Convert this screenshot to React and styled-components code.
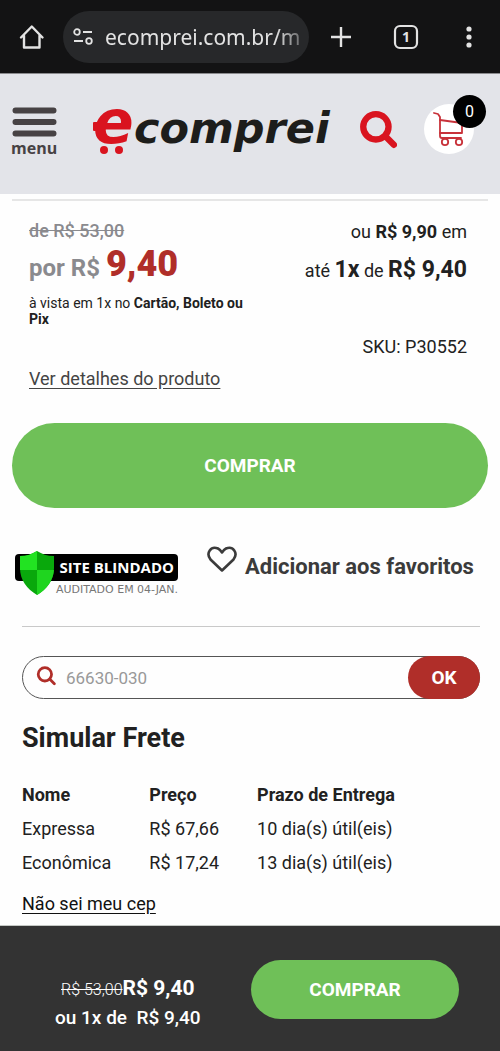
import React from 'react';
import styled, { createGlobalStyle } from 'styled-components';

const colors = {
  chrome: '#131314',
  pill: '#27282a',
  header: '#e3e4e9',
  logoRed: '#d9141f',
  red: '#b02e29',
  green: '#6fc058',
  dark: '#333333',
  text: '#212121',
  muted: '#8a8a8e',
};

const GlobalStyle = createGlobalStyle`
  * {
    box-sizing: border-box;
  }
  body {
    margin: 0;
    background: #fefefe;
    color: ${colors.text};
    font-family: Roboto, 'Liberation Sans', sans-serif;
    font-size: 18px;
  }
  button, input {
    font-family: inherit;
  }
`;

const Page = styled.div`
  display: flex;
  flex-direction: column;
  min-height: 100vh;
`;

const BrowserBar = styled.div`
  display: flex;
  align-items: center;
  gap: 17px;
  height: 74px;
  padding: 0 18px;
  background: ${colors.chrome};
  border-bottom: 1px solid #8a8a8d;
`;

const BrowserTools = styled.div`
  display: flex;
  align-items: center;
  gap: 37px;
`;

const IconButton = styled.button`
  display: flex;
  flex: none;
  padding: 0;
  border: 0;
  background: none;
  color: #e3e3e3;
  cursor: pointer;
`;

const AddressPill = styled.div`
  display: flex;
  align-items: center;
  flex: 1;
  min-width: 0;
  height: 52px;
  padding: 0 10px 0 10px;
  gap: 12px;
  border-radius: 26px;
  background: ${colors.pill};
`;

const Url = styled.span`
  flex: 1;
  overflow: hidden;
  white-space: nowrap;
  color: #e3e3e3;
  font-family: 'Noto Sans', sans-serif;
  font-size: 21px;
  line-height: 32px;
  mask-image: linear-gradient(to right, #000 88%, transparent 108%);
`;

const Header = styled.header`
  display: flex;
  align-items: flex-start;
  justify-content: space-between;
  height: 120px;
  padding: 12px 14px 0 11px;
  background: ${colors.header};
`;

const MenuButton = styled.button`
  display: flex;
  flex-direction: column;
  align-items: center;
  margin-top: 21px;
  padding: 0;
  border: 0;
  background: none;
  color: #474244;
  cursor: pointer;
`;

const MenuLabel = styled.span`
  font-family: 'Open Sans', sans-serif;
  font-size: 16px;
  font-weight: 700;
  line-height: 20px;
`;

const LogoLink = styled.a`
  display: flex;
  margin-left: 8px;
`;

const SearchButton = styled(IconButton)`
  margin-top: 25px;
  color: ${colors.logoRed};
`;

const CartButton = styled.button`
  position: relative;
  display: flex;
  align-items: center;
  justify-content: center;
  width: 50px;
  height: 50px;
  margin: 18px 12px 0 0;
  padding: 0;
  border: 0;
  border-radius: 50%;
  background: #fff;
  cursor: pointer;
`;

const CartCount = styled.span`
  position: absolute;
  top: -9px;
  right: -12px;
  width: 33px;
  border-radius: 50%;
  background: #000;
  color: #fff;
  font-size: 16px;
  line-height: 33px;
  text-align: center;
`;

const Main = styled.main`
  flex: 1;
  padding: 5px 12px 0;
`;

const PriceBlock = styled.section`
  display: flex;
  justify-content: space-between;
  height: 224px;
  padding: 18px 21px 0 17px;
  border-top: 2px solid #e6e6e6;
`;

const PriceColumn = styled.div`
  display: flex;
  flex-direction: column;
  align-items: flex-start;
  width: 220px;
`;

const OldPrice = styled.s`
  color: ${colors.muted};
  font-weight: 500;
  line-height: 24px;
`;

const Price = styled.div`
  color: ${colors.muted};
  font-size: 24px;
  font-weight: 700;
  line-height: 42px;

  strong {
    color: ${colors.red};
    font-size: 36px;
  }
`;

const PaymentNote = styled.p`
  margin: 6px 0 0;
  font-size: 14px;
  line-height: 16px;
`;

const DetailsLink = styled.a`
  margin-top: 40px;
  color: #444;
  line-height: 24px;
  text-underline-offset: 3px;
`;

const Installments = styled.div`
  margin-top: -6px;
  line-height: 38px;
  text-align: right;
`;

const Big = styled.strong`
  font-size: 23px;
`;

const Sku = styled.div`
  margin-top: 38px;
`;

const BuyButton = styled.button`
  display: block;
  width: ${(props) => props.$width || '100%'};
  height: ${(props) => props.$height}px;
  border: 0;
  border-radius: 43px;
  background: ${colors.green};
  color: #fff;
  font-size: 19px;
  font-weight: 700;
  cursor: pointer;
`;

const TrustRow = styled.div`
  display: flex;
  align-items: flex-start;
  gap: 28px;
  height: 118px;
  padding: 36px 3px 0;
`;

const Seal = styled.div`
  position: relative;
  flex: none;
  width: 163px;
  margin-top: 10px;
`;

const SealBar = styled.div`
  padding-right: 4px;
  border-radius: 4px;
  background: #000;
  color: #fff;
  font-family: 'Open Sans', sans-serif;
  font-size: 15px;
  font-weight: 700;
  line-height: 27px;
  text-align: right;
  white-space: nowrap;
`;

const SealDate = styled.div`
  color: #777;
  font-family: 'DejaVu Sans', sans-serif;
  font-size: 11px;
  line-height: 17px;
  text-align: right;
  white-space: nowrap;
`;

const Shield = styled.svg`
  position: absolute;
  top: -4px;
  left: 3px;
`;

const FavoriteButton = styled.button`
  display: flex;
  align-items: flex-start;
  gap: 7px;
  padding: 0;
  border: 0;
  background: none;
  color: #3b3b3b;
  font-size: 22px;
  font-weight: 700;
  line-height: 24px;
  white-space: nowrap;
  cursor: pointer;

  span {
    padding-top: 11px;
  }
`;

const Shipping = styled.section`
  padding: 29px 8px 0 10px;

  &::before {
    content: '';
    display: block;
    height: 1px;
    margin: -29px 0 29px;
    background: #c9c9c9;
  }
`;

const ZipForm = styled.form`
  display: flex;
  align-items: center;
  height: 43px;
  border: 1px solid #555;
  border-radius: 22px;
`;

const ZipLabel = styled.label`
  display: flex;
  padding: 0 10px 4px 13px;
  color: ${colors.red};
`;

const ZipInput = styled.input`
  flex: 1;
  min-width: 0;
  padding: 0;
  border: 0;
  outline: 0;
  background: none;
  color: #999;
  font-size: 17px;
`;

const OkButton = styled.button`
  width: 72px;
  height: 43px;
  margin-right: -1px;
  border: 0;
  border-radius: 22px;
  background: ${colors.red};
  color: #fff;
  font-size: 19px;
  font-weight: 700;
  cursor: pointer;
`;

const Title = styled.h2`
  margin: 22px 0 23px;
  font-size: 27px;
  font-weight: 700;
  line-height: 34px;
`;

const RatesTable = styled.table`
  border-collapse: collapse;
  line-height: 34px;
  text-align: left;

  th, td {
    padding: 0 38px 0 0;
  }
`;

const ZipHelp = styled.a`
  display: inline-block;
  margin-top: 12px;
  color: #111;
  line-height: 24px;
  text-underline-offset: 3px;
`;

const StickyBar = styled.footer`
  display: flex;
  align-items: flex-start;
  justify-content: space-between;
  height: 126px;
  padding: 34px 41px 0 55px;
  border-top: 1px solid #c4c8c4;
  background: ${colors.dark};
  color: #fff;
`;

const BarPrices = styled.div`
  padding-top: 14px;
  font-size: 19px;
  font-weight: 500;
  line-height: 28px;
  text-align: center;
  white-space: pre;

  s {
    font-size: 16px;
    font-weight: 300;
  }
  strong {
    font-size: 21px;
  }
`;

const rates = [
  { name: 'Expressa', price: 'R$ 67,66', time: '10 dia(s) útil(eis)' },
  { name: 'Econômica', price: 'R$ 17,24', time: '13 dia(s) útil(eis)' },
];

const Logo = () => (
  <svg width="240" height="76" viewBox="0 0 240 76" aria-label="ecomprei">
    <rect x="1" y="36" width="9" height="9" rx="1" fill={colors.logoRed} />
    <circle cx="12" cy="64" r="4" fill={colors.logoRed} />
    <circle cx="27" cy="64" r="4" fill={colors.logoRed} />
    <g fontFamily="'DejaVu Sans', sans-serif" fontWeight="700" fontStyle="italic">
      <text x="1" y="57" fontSize="60" fill={colors.logoRed}>e</text>
      <text x="42" y="57" fontSize="43" fill="#1d1d1b">comprei</text>
    </g>
  </svg>
);

const SearchIcon = ({ size, weight }) => (
  <svg width={size} height={size} viewBox="0 0 36 36" fill="none" stroke="currentColor" strokeWidth={weight}>
    <circle cx="16" cy="15" r="12" />
    <path d="M25 24l8 8" strokeLinecap="round" />
  </svg>
);

const App = () => (
  <Page>
    <GlobalStyle />
    <BrowserBar>
      <IconButton aria-label="Página inicial">
        <svg width="28" height="28" viewBox="0 0 28 28" fill="none" stroke="currentColor" strokeWidth="2.4" strokeLinejoin="round" strokeLinecap="round">
          <path d="M3 14.5L13.8 3.5L24.5 14.5M6 12.5V24.5H21.5V12.5" />
        </svg>
      </IconButton>
      <AddressPill>
        <svg width="20" height="20" viewBox="0 0 20 20" fill="none" stroke="#e3e3e3" strokeWidth="1.8">
          <circle cx="4" cy="5" r="2.8" />
          <path d="M10 5h9M1 14h9" />
          <circle cx="16" cy="14" r="2.8" />
        </svg>
        <Url>ecomprei.com.br/m</Url>
      </AddressPill>
      <BrowserTools>
        <IconButton aria-label="Nova guia">
          <svg width="30" height="30" viewBox="0 0 30 30" fill="none" stroke="currentColor" strokeWidth="2.4">
            <path d="M15 5v20M5 15h20" />
          </svg>
        </IconButton>
        <IconButton aria-label="Guias abertas">
          <svg width="26" height="26" viewBox="0 0 26 26" fill="none" stroke="currentColor" strokeWidth="2.2">
            <rect x="2" y="2" width="22" height="22" rx="5" />
            <text x="13" y="18" textAnchor="middle" fontFamily="Noto Sans" fontSize="14" fontWeight="700" fill="currentColor" stroke="none">1</text>
          </svg>
        </IconButton>
        <IconButton aria-label="Mais opções">
          <svg width="26" height="26" viewBox="0 0 26 26" fill="currentColor">
            <circle cx="13" cy="5" r="2.6" />
            <circle cx="13" cy="13" r="2.6" />
            <circle cx="13" cy="21" r="2.6" />
          </svg>
        </IconButton>
      </BrowserTools>
    </BrowserBar>

    <Header>
      <MenuButton>
        <svg width="45" height="31" viewBox="0 0 45 31" stroke="currentColor" strokeWidth="6" strokeLinecap="round">
          <path d="M3.500 3.500h38M3.500 15h38M3.500 26.500h38" />
        </svg>
        <MenuLabel>menu</MenuLabel>
      </MenuButton>
      <LogoLink href="#">
        <Logo />
      </LogoLink>
      <SearchButton aria-label="Buscar">
        <SearchIcon size={38} weight={6} />
      </SearchButton>
      <CartButton aria-label="Carrinho">
        <svg width="34" height="36" viewBox="0 0 34 36" fill="none" stroke="#c8323a" strokeWidth="1.8" strokeLinecap="round" strokeLinejoin="round">
          <path d="M2 2l4 1l2 3v19c0 1 1 2 2 2h19" />
          <path d="M8 9l22 3v10H8" />
          <circle cx="13" cy="31" r="3.2" />
          <circle cx="27" cy="31" r="3.2" />
        </svg>
        <CartCount>0</CartCount>
      </CartButton>
    </Header>

    <Main>
      <PriceBlock>
        <PriceColumn>
          <OldPrice>de R$ 53,00</OldPrice>
          <Price>
            por R$ <strong>9,40</strong>
          </Price>
          <PaymentNote>
            à vista em 1x no <strong>Cartão, Boleto ou Pix</strong>
          </PaymentNote>
          <DetailsLink href="#">Ver detalhes do produto</DetailsLink>
        </PriceColumn>
        <Installments>
          <div>
            ou <strong>R$ 9,90</strong> em
          </div>
          <div>
            até <Big>1x</Big> de <Big>R$ 9,40</Big>
          </div>
          <Sku>SKU: P30552</Sku>
        </Installments>
      </PriceBlock>

      <BuyButton $height={85}>COMPRAR</BuyButton>

      <TrustRow>
        <Seal>
          <SealBar>SITE BLINDADO</SealBar>
          <SealDate>AUDITADO EM 04-JAN.</SealDate>
          <Shield width="38" height="46" viewBox="0 0 38 46">
            <path d="M19 1c5 3 10 5 17 5v12c0 12-7 21-17 27C9 39 2 30 2 18V6c7 0 12-2 17-5z" fill="#09a80c" />
            <path d="M19 1C14 4 9 6 2 6v14h17z" fill="#22e322" />
            <path d="M19 20h17c-1 11-8 20-17 25z" fill="#1fd51f" />
          </Shield>
        </Seal>
        <FavoriteButton>
          <svg width="32" height="32" viewBox="0 0 32 32" fill="none" stroke="currentColor" strokeWidth="2.6" strokeLinejoin="round">
            <path d="M16 26.5L4.5 15.5C-.5 9 5 1.5 12 4.5C14 5.5 15 7 16 8.5C17 7 18 5.5 20 4.5C27 1.5 32.5 9 27.5 15.5z" />
          </svg>
          <span>Adicionar aos favoritos</span>
        </FavoriteButton>
      </TrustRow>

      <Shipping>
        <ZipForm onSubmit={(e) => e.preventDefault()}>
          <ZipLabel htmlFor="zip" aria-label="CEP">
            <SearchIcon size={20} weight={5} />
          </ZipLabel>
          <ZipInput id="zip" defaultValue="66630-030" />
          <OkButton type="submit">OK</OkButton>
        </ZipForm>
        <Title>Simular Frete</Title>
        <RatesTable>
          <thead>
            <tr>
              <th>Nome</th>
              <th>Preço</th>
              <th>Prazo de Entrega</th>
            </tr>
          </thead>
          <tbody>
            {rates.map((rate) => (
              <tr key={rate.name}>
                <td>{rate.name}</td>
                <td>{rate.price}</td>
                <td>{rate.time}</td>
              </tr>
            ))}
          </tbody>
        </RatesTable>
        <ZipHelp href="#">Não sei meu cep</ZipHelp>
      </Shipping>
    </Main>

    <StickyBar>
      <BarPrices>
        <div>
          <s>R$ 53,00</s>
          <strong>R$ 9,40</strong>
        </div>
        <div>{'ou 1x de  R$ 9,40'}</div>
      </BarPrices>
      <BuyButton $width="208px" $height={59}>
        COMPRAR
      </BuyButton>
    </StickyBar>
  </Page>
);

export default App;
